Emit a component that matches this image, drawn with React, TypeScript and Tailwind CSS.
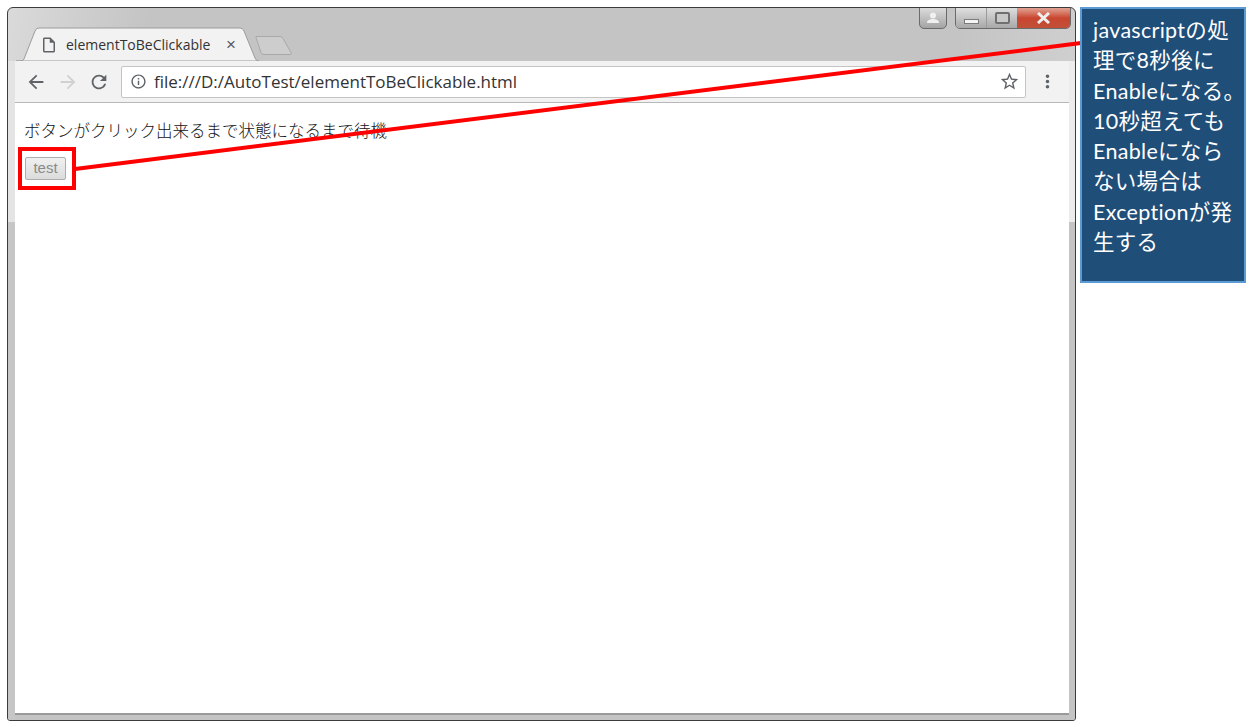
import { MdArrowBack, MdArrowForward, MdInfoOutline, MdMoreVert, MdOutlineInsertDriveFile, MdRefresh, MdStarBorder } from "react-icons/md";

const noteLines = ["javascriptの処", "理で8秒後に", "Enableになる。", "10秒超えても", "Enableになら", "ない場合は", "Exceptionが発", "生する"];

function WindowControls() {
  return (
    <div className="ml-auto flex items-start mr-[4px]">
      <div className="w-[28px] h-[22px] -mt-px mr-[8px] rounded-b-[5px] border border-[#6b6b6b] bg-gradient-to-b from-[#dcdcdc] to-[#a4a4a4] flex items-center justify-center">
        <svg width="16" height="14" viewBox="0 0 16 14">
          <circle cx="8" cy="4.5" r="3" fill="#f0f0f0" />
          <path d="M2 12c0-3 3-4 6-4s6 1 6 4z" fill="#f0f0f0" />
        </svg>
      </div>
      <div className="w-[116px] h-[22px] -mt-px rounded-b-[5px] border border-[#6b6b6b] flex overflow-hidden">
        <div className="w-[31px] border-r border-[#9a9a9a] bg-gradient-to-b from-[#e0e0e0] to-[#a8a8a8] flex items-end justify-center pb-[4px]">
          <div className="w-[15px] h-[5px] bg-[#f4f4f4] border border-[#7a7a7a]" />
        </div>
        <div className="w-[30px] bg-gradient-to-b from-[#dedede] to-[#a8a8a8] flex items-center justify-center">
          <div className="w-[15px] h-[12px] border-2 border-[#707070] rounded-[2px] bg-[#c8c8c8]" />
        </div>
        <div className="flex-1 bg-gradient-to-b from-[#dfa294] via-[#c9452f] to-[#c05038] flex items-center justify-center">
          <svg width="15" height="12" viewBox="0 0 15 12">
            <path d="M2 1 13 11M13 1 2 11" stroke="#eeeeee" strokeWidth="3" />
          </svg>
        </div>
      </div>
    </div>
  );
}

function TabStrip() {
  return (
    <div className="h-[53px] flex items-start">
      <div className="relative w-[244px] h-[53px] ml-[8px] shrink-0">
        <svg className="absolute inset-0" width="244" height="53" viewBox="0 0 244 53">
          <path d="M0 53H5q2 0 3-2L19 23q1-3 4-3H224q3 0 4 3l11 27q1 3 4 3z" fill="#f2f2f2" stroke="#9c9c9c" />
        </svg>
        <div className="absolute left-[24px] top-[28px] flex items-center">
          <MdOutlineInsertDriveFile className="text-[#5f6368] text-[18px]" />
          <span className="ml-[8px] w-[145px] text-[14px] leading-[18px] text-[#333] font-['Open_Sans',sans-serif] whitespace-nowrap">elementToBeClickable</span>
          <span className="ml-[15px] text-[17px] leading-[18px] text-[#5a5a5a] font-['Liberation_Sans',sans-serif]">×</span>
        </div>
      </div>
      <svg className="-ml-[5px] mt-[27px] shrink-0" width="38" height="21" viewBox="0 0 38 21">
        <path d="M1 1.5h24q2 0 3 2l8 14q1 2-1 2H9q-2 0-3-2L1 2.5z" fill="#cdcdcd" stroke="#a8a8a8" />
      </svg>
      <WindowControls />
    </div>
  );
}

function Toolbar() {
  return (
    <div className="h-[42px] bg-[#f2f2f2] border-b border-[#b8b8b8] flex items-center">
      <MdArrowBack className="ml-[10px] text-[#5f6368] text-[22px]" />
      <MdArrowForward className="ml-[10px] text-[#d0d0d0] text-[22px]" />
      <MdRefresh className="ml-[9px] text-[#5f6368] text-[22px]" />
      <div className="ml-[11px] w-[905px] h-[32px] bg-white border border-[#c4c4c4] rounded-[2px] flex items-center">
        <MdInfoOutline className="ml-[8px] text-[#5f6368] text-[17px]" />
        <span className="ml-[7px] text-[17px] text-[#333] font-['Open_Sans',sans-serif] whitespace-nowrap">file:///D:/AutoTest/elementToBeClickable.html</span>
        <MdStarBorder className="ml-auto mr-[5px] text-[#5f6368] text-[21px]" />
      </div>
      <MdMoreVert className="ml-[11px] text-[#5f6368] text-[21px]" />
    </div>
  );
}

function BrowserWindow() {
  return (
    <div className="w-[1069px] h-[714px] rounded-t-[6px] rounded-b-[3px] border border-[#3c3c3c] bg-[linear-gradient(100deg,#dadada,#c4c4c4_12%,#c4c4c4_80%,#dadada)] flex flex-col overflow-hidden shrink-0">
      <TabStrip />
      <div className="flex-1 flex min-h-0">
        <div className="w-[7px] bg-gradient-to-b from-[#e4e4e4] from-[24.5%] to-[#c6c6c6] to-[24.5%]" />
        <div className="flex-1 flex flex-col min-w-0">
          <Toolbar />
          <div className="flex-1 bg-white pl-[9px] pt-[15px] border-b-2 border-[#9a9a9a]">
            <p className="text-[16.5px] leading-[24px] text-[#111] font-['Noto_Sans_CJK_JP',sans-serif] font-light whitespace-nowrap">ボタンがクリック出来るまで状態になるまで待機</p>
            <button type="button" disabled className="block mt-[15px] ml-px w-[41px] h-[23px] pb-[2px] rounded-[2px] border border-[#adadad] bg-gradient-to-b from-[#f0f0f0] to-[#dcdcdc] text-[15px] leading-[18px] text-[#8a8a8a] font-['Liberation_Sans',sans-serif]">test</button>
          </div>
          <div className="h-[5px] bg-[#c4c4c4]" />
        </div>
        <div className="w-[6px] bg-gradient-to-b from-[#ececec] from-[24.5%] to-[#c4c4c4] to-[24.5%]" />
      </div>
    </div>
  );
}

export default function App() {
  return (
    <div className="relative w-[1252px] h-[727px] bg-white overflow-hidden flex items-start pl-[7px] pt-[7px]">
      <BrowserWindow />
      <div className="ml-[4px] w-[166px] h-[276px] bg-[#1f4e79] border-2 border-[#5b9bd5] pl-[11px] pt-[6px] shrink-0 relative z-10">
        {noteLines.map((line) => (
          <div key={line} className="text-[21.5px] leading-[30.3px] tracking-[0.3px] text-white whitespace-nowrap font-['Lato','Noto_Sans_CJK_JP',sans-serif]">{line}</div>
        ))}
      </div>
      {/* red callout over the page */}
      <div className="absolute left-[18px] top-[147px] w-[58px] h-[43px] border-4 border-[#ff0000]" />
      <svg className="absolute left-0 top-0 pointer-events-none" width="1252" height="727" viewBox="0 0 1252 727">
        <line x1="75" y1="169" x2="1081" y2="43" stroke="#ff0000" strokeWidth="4" />
      </svg>
    </div>
  );
}
